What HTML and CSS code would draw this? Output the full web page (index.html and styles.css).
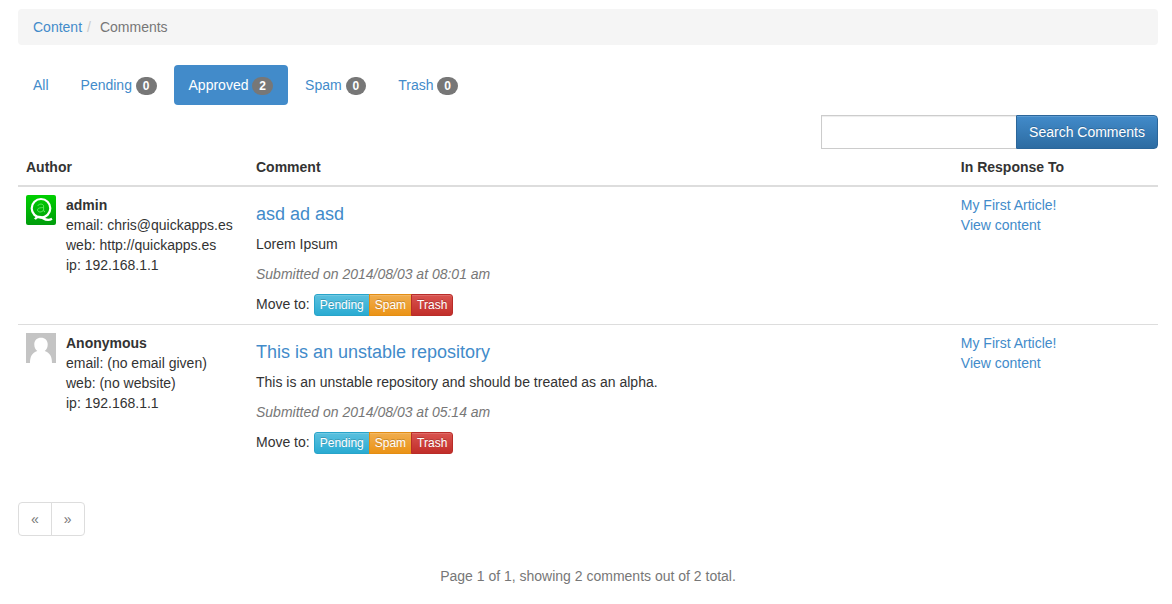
FILE: index.html
```html
<!DOCTYPE html>
<html lang="en">
<head>
<meta charset="utf-8">
<title>Comments</title>
<link rel="stylesheet" href="styles.css">
</head>
<body>
<nav aria-label="Breadcrumb">
  <ol class="breadcrumb">
    <li><a href="#">Content</a></li>
    <li class="current">Comments</li>
  </ol>
</nav>

<ul class="pills">
  <li><a href="#">All</a></li>
  <li><a href="#">Pending <span class="badge">0</span></a></li>
  <li><a class="active" href="#">Approved <span class="badge">2</span></a></li>
  <li><a href="#">Spam <span class="badge">0</span></a></li>
  <li><a href="#">Trash <span class="badge">0</span></a></li>
</ul>

<form class="search">
  <input class="search-input" type="text" aria-label="Search Comments">
  <button class="search-button" type="submit">Search Comments</button>
</form>

<table class="comments">
  <thead>
    <tr>
      <th class="col-author">Author</th>
      <th>Comment</th>
      <th class="col-response">In Response To</th>
    </tr>
  </thead>
  <tbody>
    <tr>
      <td>
        <div class="author">
          <svg class="avatar" viewBox="0 0 30 30" aria-hidden="true">
            <defs>
              <linearGradient id="green" x1="0" y1="0" x2="0" y2="1">
                <stop offset="0" stop-color="#00d000"/>
                <stop offset="1" stop-color="#009c0c"/>
              </linearGradient>
            </defs>
            <rect width="30" height="30" rx="2" fill="url(#green)"/>
            <circle cx="15" cy="13.3" r="9.3" fill="none" stroke="#fff" stroke-width="2.2"/>
            <path d="M9 24.300C10.500 21.300 14 21.300 17 23.200S22.500 25.800 26 23.800" fill="none" stroke="#fff" stroke-width="2.200"/>
            <path d="M11.800 11C12.300 8.500 17.600 8.300 17.600 11.100V15.100Q17.600 16.800 19 16.800M17.600 12.300C15.300 13.100 11.600 12.300 11.600 15C11.600 17.800 16.300 17.500 17.600 15" fill="none" stroke="#5fe65f" stroke-width="1"/>
          </svg>
          <div>
            <strong>admin</strong><br>
            email: chris@quickapps.es<br>
            web: http://quickapps.es<br>
            ip: 192.168.1.1
          </div>
        </div>
      </td>
      <td>
        <h4><a href="#">asd ad asd</a></h4>
        <p>Lorem Ipsum</p>
        <p class="submitted">Submitted on 2014/08/03 at 08:01 am</p>
        <div class="move">
          <span>Move to:</span>
          <div class="group">
            <a class="btn info" href="#">Pending</a><a class="btn warning" href="#">Spam</a><a class="btn danger" href="#">Trash</a>
          </div>
        </div>
      </td>
      <td><a href="#">My First Article!</a><br><a href="#">View content</a></td>
    </tr>
    <tr>
      <td>
        <div class="author">
          <svg class="avatar" viewBox="0 0 30 30" aria-hidden="true">
            <rect width="30" height="30" fill="#c4c4c4"/>
            <path d="M4 30C4 23.500 6 20 11.300 18C9.300 16.500 8.300 14.500 8.300 11.500C8.300 7.500 11 4.800 15 4.800S21.700 7.500 21.700 11.500C21.700 14.500 20.700 16.500 18.700 18C24 20 26 23.500 26 30Z" fill="#fff"/>
          </svg>
          <div>
            <strong>Anonymous</strong><br>
            email: (no email given)<br>
            web: (no website)<br>
            ip: 192.168.1.1
          </div>
        </div>
      </td>
      <td>
        <h4><a href="#">This is an unstable repository</a></h4>
        <p>This is an unstable repository and should be treated as an alpha.</p>
        <p class="submitted">Submitted on 2014/08/03 at 05:14 am</p>
        <div class="move">
          <span>Move to:</span>
          <div class="group">
            <a class="btn info" href="#">Pending</a><a class="btn warning" href="#">Spam</a><a class="btn danger" href="#">Trash</a>
          </div>
        </div>
      </td>
      <td><a href="#">My First Article!</a><br><a href="#">View content</a></td>
    </tr>
  </tbody>
</table>

<ul class="pagination">
  <li><a href="#" aria-label="Previous">«</a></li>
  <li><a href="#" aria-label="Next">»</a></li>
</ul>

<p class="summary">Page 1 of 1, showing 2 comments out of 2 total.</p>
</body>
</html>
```
FILE: styles.css
```css
* {
  box-sizing: border-box;
}

body {
  margin: 0;
  padding: 9px 14px 8px 18px;
  background: #fff;
  color: #333;
  font: 14px/20px "Liberation Sans", Arial, sans-serif;
}

a {
  color: #428bca;
  text-decoration: none;
}

ul,
ol {
  margin: 0;
  padding: 0;
  list-style: none;
}

.breadcrumb {
  display: flex;
  margin-bottom: 20px;
  padding: 8px 15px;
  border-radius: 4px;
  background: #f5f5f5;
}

.breadcrumb .current {
  color: #777;
}

.breadcrumb .current::before {
  content: "/";
  padding: 0 9px 0 5px;
  color: #ccc;
}

.pills {
  display: flex;
  gap: 2px;
  margin-bottom: 10px;
}

.pills a {
  display: block;
  padding: 10px 15px;
  border-radius: 4px;
}

.pills .active {
  background: #428bca;
  color: #fff;
}

.badge {
  display: inline-block;
  min-width: 10px;
  padding: 3px 7px;
  border-radius: 10px;
  background: #777;
  color: #fff;
  font-size: 12px;
  font-weight: bold;
  line-height: 12px;
  text-align: center;
}

.search {
  display: flex;
  justify-content: flex-end;
}

.search-input {
  width: 195px;
  height: 34px;
  padding: 6px 12px;
  border: 1px solid #ccc;
  border-right: 0;
  border-radius: 0;
  box-shadow: inset 0 1px 1px rgba(0, 0, 0, 0.075);
  font: inherit;
}

.search-button {
  padding: 6px 12px;
  border: 1px solid #2b669a;
  border-radius: 0 4px 4px 0;
  background: linear-gradient(#428bca, #2d6ca2);
  box-shadow: inset 0 1px 0 rgba(255, 255, 255, 0.15);
  color: #fff;
  font: inherit;
  text-shadow: 0 -1px 0 rgba(0, 0, 0, 0.2);
}

.comments {
  width: 100%;
  margin-bottom: 40px;
  border-spacing: 0;
  table-layout: fixed;
}

.comments th,
.comments td {
  padding: 8px;
  text-align: left;
  vertical-align: top;
}

.comments th {
  border-bottom: 2px solid #ddd;
}

.comments tr + tr td {
  border-top: 1px solid #ddd;
}

.col-author {
  width: 230px;
}

.col-response {
  width: 18%;
}

.author {
  display: flex;
  gap: 10px;
}

.avatar {
  flex: none;
  width: 30px;
  height: 30px;
}

h4 {
  margin: 9px 0 10px;
  font-size: 18px;
  font-weight: normal;
  line-height: 20px;
}

p {
  margin: 0 0 10px;
}

.submitted {
  color: #777;
  font-style: italic;
}

.move {
  display: flex;
  gap: 4px;
}

.group {
  display: flex;
}

.btn {
  padding: 1px 5px;
  border: 1px solid;
  color: #fff;
  font-size: 12px;
  line-height: 18px;
  text-shadow: 0 -1px 0 rgba(0, 0, 0, 0.2);
  box-shadow: inset 0 1px 0 rgba(255, 255, 255, 0.15);
}

.btn + .btn {
  margin-left: -1px;
}

.btn:first-child {
  border-radius: 3px 0 0 3px;
}

.btn:last-child {
  border-radius: 0 3px 3px 0;
}

.info {
  border-color: #28a4c9;
  background: linear-gradient(#5bc0de, #2aabd2);
}

.warning {
  border-color: #e38d13;
  background: linear-gradient(#f0ad4e, #eb9316);
}

.danger {
  border-color: #b92c28;
  background: linear-gradient(#d9534f, #c12e2a);
}

.pagination {
  display: flex;
  margin-bottom: 30px;
}

.pagination a {
  display: block;
  padding: 6px 12px;
  border: 1px solid #ddd;
  color: #777;
}

.pagination li + li {
  margin-left: -1px;
}

.pagination li:first-child a {
  border-radius: 4px 0 0 4px;
}

.pagination li:last-child a {
  border-radius: 0 4px 4px 0;
}

.summary {
  margin: 0;
  color: #777;
  text-align: center;
}
```
